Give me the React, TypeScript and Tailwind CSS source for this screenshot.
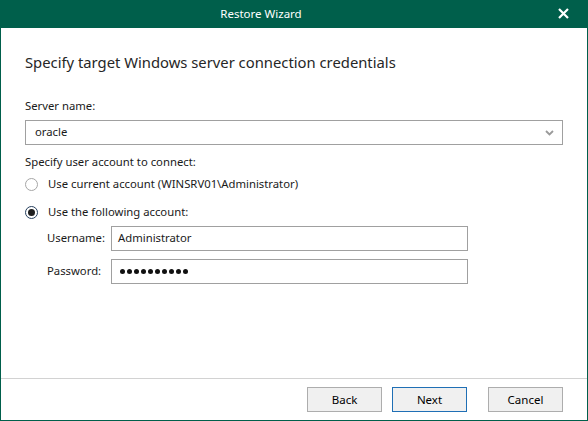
import { useState } from 'react'

function Radio({ checked, label, onClick }: { checked: boolean; label: string; onClick: () => void }) {
  return (
    <div className="flex items-center h-[20px] cursor-default" onClick={onClick}>
      <div
        className={
          'w-[13px] h-[13px] rounded-full border bg-white flex items-center justify-center ' +
          (checked ? 'border-[#27405e]' : 'border-[#a6a6a6]')
        }
      >
        {checked && <div className="w-[7px] h-[7px] rounded-full bg-[#1f1f1f]" />}
      </div>
      <span className="ml-[10px]">{label}</span>
    </div>
  )
}

function Button({ label, primary }: { label: string; primary?: boolean }) {
  return (
    <button
      className={
        'w-[75px] h-[25px] bg-[#f0f0f0] border text-[11.5px] text-black ' +
        (primary ? 'border-[#1f6fb5]' : 'border-[#adadad]')
      }
    >
      {label}
    </button>
  )
}

export default function App() {
  const [useCurrent, setUseCurrent] = useState(false)

  return (
    <div
      className="w-[588px] h-[421px] flex flex-col bg-white text-[11.3px] text-[#1a1a1a]"
      style={{ fontFamily: '"Segoe UI", "Noto Sans", sans-serif' }}
    >
      {/* title bar */}
      <div className="h-[28px] shrink-0 bg-[#005f4b] relative flex items-center justify-center pr-[66px]">
        <span className="text-white text-[11.5px]">Restore Wizard</span>
        <svg className="absolute right-[19px] top-[8px]" width="11" height="11" viewBox="0 0 11 11">
          <path d="M1 1 L10 10 M10 1 L1 10" stroke="white" strokeWidth="2.2" />
        </svg>
      </div>

      <div className="flex-1 flex flex-col border-x border-b border-[#005f4b]">
        <div className="flex-1 flex flex-col px-6">
          <div className="mt-[24px] h-[20px] text-[14.8px] leading-[20px] text-[#262626]">
            Specify target Windows server connection credentials
          </div>

          <div className="mt-[26px] h-[16px] leading-[16px]">Server name:</div>
          <div className="mt-[6px] h-[25px] border border-[#a0a0a0] flex items-center justify-between pl-[9px] pr-[8px]">
            <span>oracle</span>
            <svg width="9" height="6" viewBox="0 0 9 6">
              <path d="M1 1 L4.5 4.5 L8 1" stroke="#9a9a9a" strokeWidth="1.8" fill="none" />
            </svg>
          </div>

          <div className="mt-[9px] h-[16px] leading-[16px]">Specify user account to connect:</div>
          <div className="mt-[4px]">
            <Radio
              checked={useCurrent}
              label="Use current account (WINSRV01\Administrator)"
              onClick={() => setUseCurrent(true)}
            />
          </div>
          <div className="mt-[8px]">
            <Radio checked={!useCurrent} label="Use the following account:" onClick={() => setUseCurrent(false)} />
          </div>

          <div className="mt-[4px] pl-[22px] flex items-center">
            <span className="w-[64px]">Username:</span>
            <div className="w-[357px] h-[25px] border border-[#a0a0a0] flex items-center px-[6px]">Administrator</div>
          </div>
          <div className="mt-[8px] pl-[22px] flex items-center">
            <span className="w-[64px]">Password:</span>
            <div className="w-[357px] h-[25px] border border-[#a0a0a0] flex items-center gap-[2px] pl-[8px]">
              {Array.from({ length: 10 }).map((_, i) => (
                <div key={i} className="w-[5px] h-[5px] rounded-full bg-[#111]" />
              ))}
            </div>
          </div>
        </div>

        {/* footer */}
        <div className="h-[42px] shrink-0 border-t border-[#d2d2d2] flex items-start justify-end pt-[8px] pr-[24px]">
          <Button label="Back" />
          <div className="w-[10px]" />
          <Button label="Next" primary />
          <div className="w-[21px]" />
          <Button label="Cancel" />
        </div>
      </div>
    </div>
  )
}
